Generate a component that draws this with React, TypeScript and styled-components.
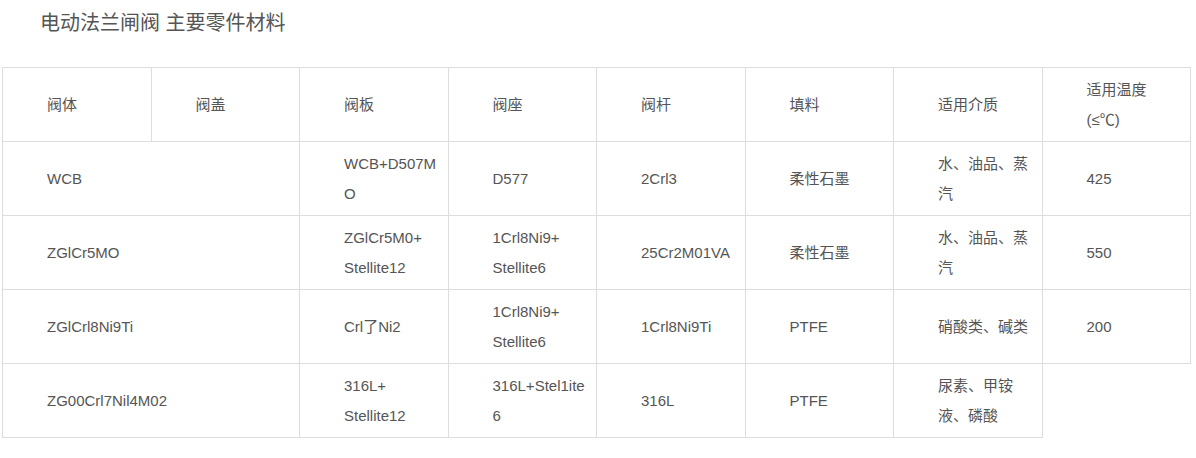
import styled, { createGlobalStyle } from 'styled-components';

const GlobalStyle = createGlobalStyle`
    html, body {
        margin: 0;
        padding: 0;
        background: #fff;
    }
    body {
        font-family: 'Liberation Sans', Arial, 'Noto Sans CJK SC', sans-serif;
        color: #555;
    }
`;

type Cell = { lines: string[]; span?: number };

const header: Cell[] = [
    { lines: ['阀体'] },
    { lines: ['阀盖'] },
    { lines: ['阀板'] },
    { lines: ['阀座'] },
    { lines: ['阀杆'] },
    { lines: ['填料'] },
    { lines: ['适用介质'] },
    { lines: ['适用温度', '(≤℃)'] },
];

const rows: Cell[][] = [
    [
        { lines: ['WCB'], span: 2 },
        { lines: ['WCB+D507M', 'O'] },
        { lines: ['D577'] },
        { lines: ['2Crl3'] },
        { lines: ['柔性石墨'] },
        { lines: ['水、油品、蒸', '汽'] },
        { lines: ['425'] },
    ],
    [
        { lines: ['ZGlCr5MO'], span: 2 },
        { lines: ['ZGlCr5M0+', 'Stellite12'] },
        { lines: ['1Crl8Ni9+', 'Stellite6'] },
        { lines: ['25Cr2M01VA'] },
        { lines: ['柔性石墨'] },
        { lines: ['水、油品、蒸', '汽'] },
        { lines: ['550'] },
    ],
    [
        { lines: ['ZGlCrl8Ni9Ti'], span: 2 },
        { lines: ['Crl了Ni2'] },
        { lines: ['1Crl8Ni9+', 'Stellite6'] },
        { lines: ['1Crl8Ni9Ti'] },
        { lines: ['PTFE'] },
        { lines: ['硝酸类、碱类'] },
        { lines: ['200'] },
    ],
    [
        { lines: ['ZG00Crl7Nil4M02'], span: 2 },
        { lines: ['316L+', 'Stellite12'] },
        { lines: ['316L+Stel1ite', '6'] },
        { lines: ['316L'] },
        { lines: ['PTFE'] },
        { lines: ['尿素、甲铵', '液、磷酸'] },
    ],
];

const renderCell = (cell: Cell, i: number) => (
    <Td key={i} colSpan={cell.span}>
        {cell.lines.map((line, j) => (
            <Line key={j}>{line}</Line>
        ))}
    </Td>
);

const App = () => {
    return (
        <>
            <GlobalStyle />
            <Page>
                <Title>电动法兰闸阀 主要零件材料</Title>
                <Table>
                    <colgroup>
                        {header.map((_, i) => (
                            <col key={i} />
                        ))}
                    </colgroup>
                    <tbody>
                        <tr>{header.map(renderCell)}</tr>
                        {rows.map((row, i) => (
                            <tr key={i}>{row.map(renderCell)}</tr>
                        ))}
                    </tbody>
                </Table>
            </Page>
        </>
    );
};

export default App;

const Page = styled.div`
    width: 1196px;
    padding: 0 2px;
    box-sizing: border-box;
`;

const Title = styled.h3`
    margin: 0 0 21px 0;
    padding-left: 38px;
    height: 46px;
    line-height: 46px;
    font-size: 20px;
    font-weight: 400;
    color: #555;
    font-family: 'Liberation Sans', 'Noto Sans CJK SC', sans-serif;
`;

const Table = styled.table`
    width: 1189px;
    table-layout: fixed;
    border-collapse: collapse;
    & col {
        width: 12.5%;
    }
`;

const Td = styled.td`
    border: 1px solid #ddd;
    padding: 7px 4px 6px 44px;
    font-size: 15px;
    line-height: 30px;
    color: #555;
    vertical-align: middle;
    text-align: left;
    white-space: nowrap;
`;

const Line = styled.div`
    font-family: 'Liberation Sans', Arial, 'Noto Sans CJK SC', sans-serif;
`;
